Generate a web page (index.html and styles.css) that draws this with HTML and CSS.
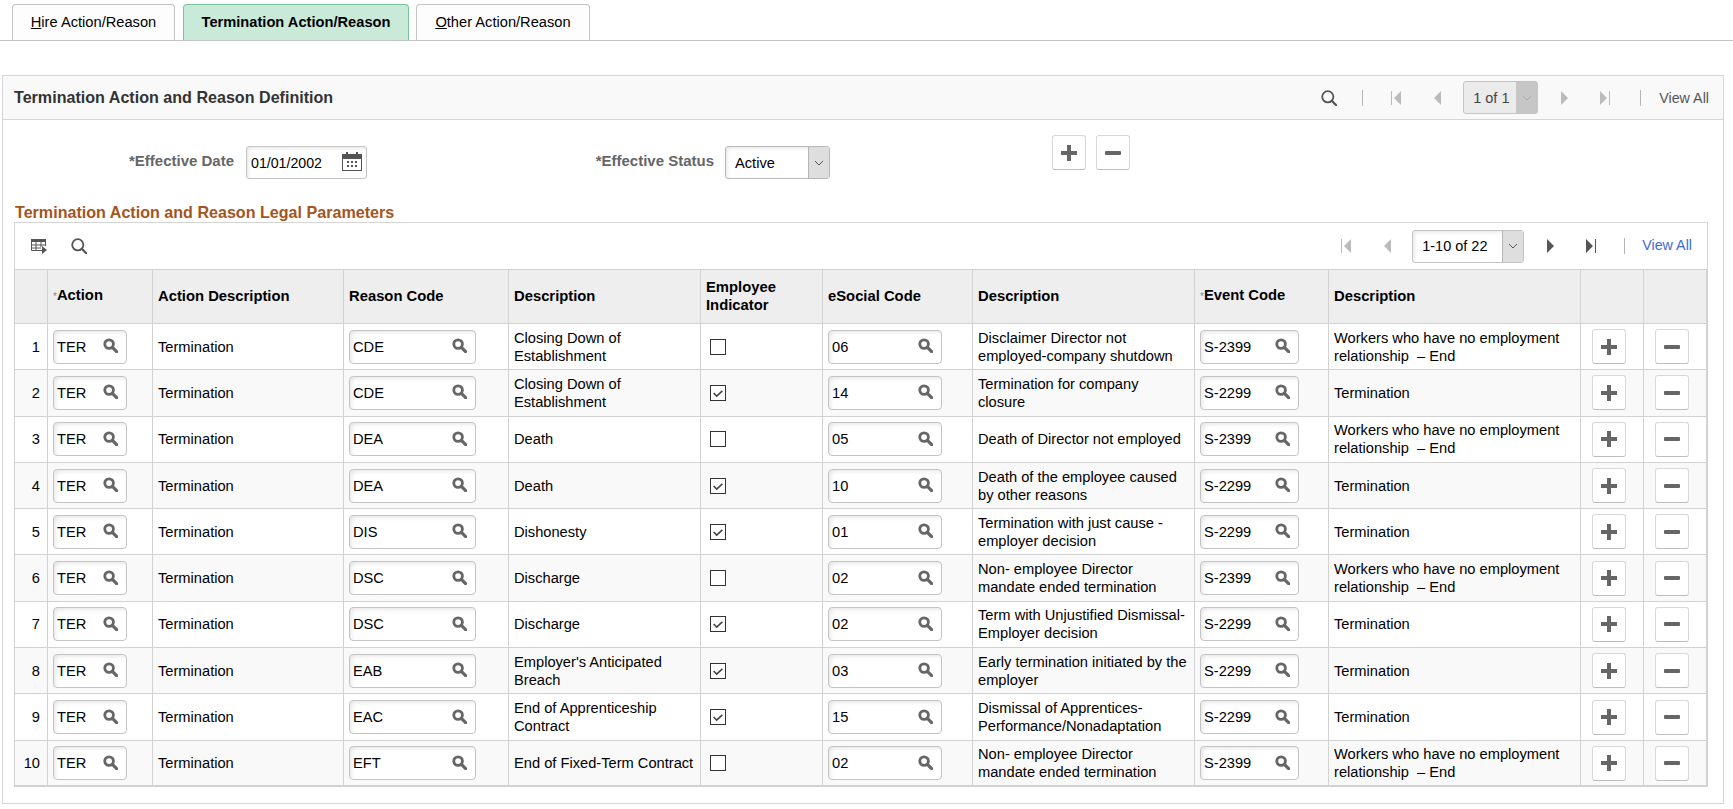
FILE: index.html
```html
<!DOCTYPE html>
<html lang="en">
<head>
  <meta charset="UTF-8" />
  <title>Termination Action/Reason</title>
  <link rel="stylesheet" href="styles.css">
</head>
<body>

  <svg class="sprites" width="0" height="0">
    <symbol id="i-lookup" viewBox="0 0 16 16">
      <circle cx="6.5" cy="6.5" r="4.6" fill="none" stroke="#666" stroke-width="3"/>
      <path d="M10 10l4.5 4.5" stroke="#666" stroke-width="3.4" stroke-linecap="round"/>
    </symbol>
    <symbol id="i-search" viewBox="0 0 16 16">
      <circle cx="6.8" cy="6.8" r="5.6" fill="none" stroke="#555" stroke-width="1.8"/>
      <path d="M10.8 10.8l4.4 4.4" stroke="#555" stroke-width="2.2" stroke-linecap="round"/>
    </symbol>
    <symbol id="i-plus" viewBox="0 0 16 16">
      <path d="M6 0h4v6h6v4h-6v6h-4v-6h-6v-4h6z" fill="#666"/>
    </symbol>
    <symbol id="i-minus" viewBox="0 0 16 16">
      <rect x="0" y="6" width="16" height="4" rx="1" fill="#666"/>
    </symbol>
    <symbol id="i-first" viewBox="0 0 10 14">
      <path d="M0 0h1v14h-1zM10 0v14l-7-7z" fill="currentColor"/>
    </symbol>
    <symbol id="i-prev" viewBox="0 0 7 14">
      <path d="M7 0v14l-7-7z" fill="currentColor"/>
    </symbol>
    <symbol id="i-next" viewBox="0 0 7 14">
      <path d="M0 0v14l7-7z" fill="currentColor"/>
    </symbol>
    <symbol id="i-last" viewBox="0 0 10 14">
      <path d="M0 0v14l7-7zM9 0h1v14h-1z" fill="currentColor"/>
    </symbol>
    <symbol id="i-chevron" viewBox="0 0 10 6">
      <path d="M1 1l4 4 4-4" fill="none" stroke="currentColor" stroke-width="1"/>
    </symbol>
    <symbol id="i-check" viewBox="0 0 16 16">
      <path d="M3 8l3.5 3.5 6.5-6" fill="none" stroke="#444" stroke-width="1.8"/>
    </symbol>
    <symbol id="i-calendar" viewBox="0 0 20 19">
      <path d="M0 2h4V0h2v2h8V0h2v2h4v5H0z" fill="#555"/>
      <rect x=".5" y="6.5" width="19" height="12" fill="#fff" stroke="#555"/>
      <path d="M5 9h2v2H5zM9 9h2v2H9zM13 9h2v2h-2zM5 13h2v2H5zM9 13h2v2H9zM13 13h2v2h-2z" fill="#555"/>
    </symbol>
    <symbol id="i-columns" viewBox="0 0 16 16">
      <path d="M0 1h15v3H0z" fill="#555"/>
      <path d="M.5 4v8.5H11M5 4v8M10 4v5M14.5 4v4M1 7h13M1 10h9" fill="none" stroke="#555"/>
      <path d="M11 8l5 4-5 4z" fill="#555"/>
    </symbol>
  </svg>

  <div class="tabs">
    <a class="tab tab-hire"><u>H</u>ire Action/Reason</a>
    <a class="tab tab-term active">Termination Action/Reason</a>
    <a class="tab tab-other"><u>O</u>ther Action/Reason</a>
  </div>

  <div class="panel">
    <div class="panel-head">
      <h2>Termination Action and Reason Definition</h2>
      <div class="pager pager-top">
        <svg class="ic16"><use href="#i-search"/></svg>
        <span class="sep s1"></span>
        <svg class="nav-first off"><use href="#i-first"/></svg>
        <svg class="nav-prev off"><use href="#i-prev"/></svg>
        <div class="page-drop off">
          <span>1 of 1</span>
          <b><svg><use href="#i-chevron"/></svg></b>
        </div>
        <svg class="nav-next off"><use href="#i-next"/></svg>
        <svg class="nav-last off"><use href="#i-last"/></svg>
        <span class="sep s2"></span>
        <a class="view-all">View All</a>
      </div>
    </div>

    <div class="form-row">
      <label class="lbl-date">*Effective Date</label>
      <div class="date-box">
        <span>01/01/2002</span>
        <svg><use href="#i-calendar"/></svg>
      </div>
      <label class="lbl-status">*Effective Status</label>
      <div class="select-box">
        <span>Active</span>
        <b><svg><use href="#i-chevron"/></svg></b>
      </div>
      <button class="btn btn-add"><svg><use href="#i-plus"/></svg></button>
      <button class="btn"><svg><use href="#i-minus"/></svg></button>
    </div>

    <h3>Termination Action and Reason Legal Parameters</h3>

    <div class="grid">
      <div class="grid-bar">
        <svg class="ic16"><use href="#i-columns"/></svg>
        <svg class="ic16 bar-search"><use href="#i-search"/></svg>
        <div class="pager pager-grid">
          <svg class="nav-first off"><use href="#i-first"/></svg>
          <svg class="nav-prev off"><use href="#i-prev"/></svg>
          <div class="page-drop">
            <span>1-10 of 22</span>
            <b><svg><use href="#i-chevron"/></svg></b>
          </div>
          <svg class="nav-next"><use href="#i-next"/></svg>
          <svg class="nav-last"><use href="#i-last"/></svg>
          <span class="sep s2"></span>
          <a class="view-all">View All</a>
        </div>
      </div>

      <table>
        <colgroup>
          <col class="c-num"><col class="c-action"><col class="c-adesc"><col class="c-reason"><col class="c-desc">
          <col class="c-emp"><col class="c-esoc"><col class="c-edesc"><col class="c-event"><col class="c-evdesc">
          <col class="c-btn"><col class="c-btn">
        </colgroup>
        <thead>
          <tr>
            <th></th>
            <th><i>*</i>Action</th>
            <th>Action Description</th>
            <th>Reason Code</th>
            <th>Description</th>
            <th>Employee<br>Indicator</th>
            <th>eSocial Code</th>
            <th>Description</th>
            <th><i>*</i>Event Code</th>
            <th>Description</th>
            <th></th>
            <th></th>
          </tr>
        </thead>
        <tbody>
          <tr>
            <td class="num">1</td>
            <td><div class="lookup w-action">TER<svg><use href="#i-lookup"/></svg></div></td>
            <td>Termination</td>
            <td><div class="lookup w-reason">CDE<svg><use href="#i-lookup"/></svg></div></td>
            <td>Closing Down of<br>Establishment</td>
            <td><span class="check"></span></td>
            <td><div class="lookup w-esoc">06<svg><use href="#i-lookup"/></svg></div></td>
            <td>Disclaimer Director not<br>employed-company shutdown</td>
            <td><div class="lookup w-event">S-2399<svg><use href="#i-lookup"/></svg></div></td>
            <td>Workers who have no employment<br>relationship &nbsp;– End</td>
            <td><button class="btn"><svg><use href="#i-plus"/></svg></button></td>
            <td><button class="btn"><svg><use href="#i-minus"/></svg></button></td>
          </tr>
          <tr>
            <td class="num">2</td>
            <td><div class="lookup w-action">TER<svg><use href="#i-lookup"/></svg></div></td>
            <td>Termination</td>
            <td><div class="lookup w-reason">CDE<svg><use href="#i-lookup"/></svg></div></td>
            <td>Closing Down of<br>Establishment</td>
            <td><span class="check"><svg><use href="#i-check"/></svg></span></td>
            <td><div class="lookup w-esoc">14<svg><use href="#i-lookup"/></svg></div></td>
            <td>Termination for company<br>closure</td>
            <td><div class="lookup w-event">S-2299<svg><use href="#i-lookup"/></svg></div></td>
            <td>Termination</td>
            <td><button class="btn"><svg><use href="#i-plus"/></svg></button></td>
            <td><button class="btn"><svg><use href="#i-minus"/></svg></button></td>
          </tr>
          <tr>
            <td class="num">3</td>
            <td><div class="lookup w-action">TER<svg><use href="#i-lookup"/></svg></div></td>
            <td>Termination</td>
            <td><div class="lookup w-reason">DEA<svg><use href="#i-lookup"/></svg></div></td>
            <td>Death</td>
            <td><span class="check"></span></td>
            <td><div class="lookup w-esoc">05<svg><use href="#i-lookup"/></svg></div></td>
            <td>Death of Director not employed</td>
            <td><div class="lookup w-event">S-2399<svg><use href="#i-lookup"/></svg></div></td>
            <td>Workers who have no employment<br>relationship &nbsp;– End</td>
            <td><button class="btn"><svg><use href="#i-plus"/></svg></button></td>
            <td><button class="btn"><svg><use href="#i-minus"/></svg></button></td>
          </tr>
          <tr>
            <td class="num">4</td>
            <td><div class="lookup w-action">TER<svg><use href="#i-lookup"/></svg></div></td>
            <td>Termination</td>
            <td><div class="lookup w-reason">DEA<svg><use href="#i-lookup"/></svg></div></td>
            <td>Death</td>
            <td><span class="check"><svg><use href="#i-check"/></svg></span></td>
            <td><div class="lookup w-esoc">10<svg><use href="#i-lookup"/></svg></div></td>
            <td>Death of the employee caused<br>by other reasons</td>
            <td><div class="lookup w-event">S-2299<svg><use href="#i-lookup"/></svg></div></td>
            <td>Termination</td>
            <td><button class="btn"><svg><use href="#i-plus"/></svg></button></td>
            <td><button class="btn"><svg><use href="#i-minus"/></svg></button></td>
          </tr>
          <tr>
            <td class="num">5</td>
            <td><div class="lookup w-action">TER<svg><use href="#i-lookup"/></svg></div></td>
            <td>Termination</td>
            <td><div class="lookup w-reason">DIS<svg><use href="#i-lookup"/></svg></div></td>
            <td>Dishonesty</td>
            <td><span class="check"><svg><use href="#i-check"/></svg></span></td>
            <td><div class="lookup w-esoc">01<svg><use href="#i-lookup"/></svg></div></td>
            <td>Termination with just cause -<br>employer decision</td>
            <td><div class="lookup w-event">S-2299<svg><use href="#i-lookup"/></svg></div></td>
            <td>Termination</td>
            <td><button class="btn"><svg><use href="#i-plus"/></svg></button></td>
            <td><button class="btn"><svg><use href="#i-minus"/></svg></button></td>
          </tr>
          <tr>
            <td class="num">6</td>
            <td><div class="lookup w-action">TER<svg><use href="#i-lookup"/></svg></div></td>
            <td>Termination</td>
            <td><div class="lookup w-reason">DSC<svg><use href="#i-lookup"/></svg></div></td>
            <td>Discharge</td>
            <td><span class="check"></span></td>
            <td><div class="lookup w-esoc">02<svg><use href="#i-lookup"/></svg></div></td>
            <td>Non- employee Director<br>mandate ended termination</td>
            <td><div class="lookup w-event">S-2399<svg><use href="#i-lookup"/></svg></div></td>
            <td>Workers who have no employment<br>relationship &nbsp;– End</td>
            <td><button class="btn"><svg><use href="#i-plus"/></svg></button></td>
            <td><button class="btn"><svg><use href="#i-minus"/></svg></button></td>
          </tr>
          <tr>
            <td class="num">7</td>
            <td><div class="lookup w-action">TER<svg><use href="#i-lookup"/></svg></div></td>
            <td>Termination</td>
            <td><div class="lookup w-reason">DSC<svg><use href="#i-lookup"/></svg></div></td>
            <td>Discharge</td>
            <td><span class="check"><svg><use href="#i-check"/></svg></span></td>
            <td><div class="lookup w-esoc">02<svg><use href="#i-lookup"/></svg></div></td>
            <td>Term with Unjustified Dismissal-<br>Employer decision</td>
            <td><div class="lookup w-event">S-2299<svg><use href="#i-lookup"/></svg></div></td>
            <td>Termination</td>
            <td><button class="btn"><svg><use href="#i-plus"/></svg></button></td>
            <td><button class="btn"><svg><use href="#i-minus"/></svg></button></td>
          </tr>
          <tr>
            <td class="num">8</td>
            <td><div class="lookup w-action">TER<svg><use href="#i-lookup"/></svg></div></td>
            <td>Termination</td>
            <td><div class="lookup w-reason">EAB<svg><use href="#i-lookup"/></svg></div></td>
            <td>Employer's Anticipated<br>Breach</td>
            <td><span class="check"><svg><use href="#i-check"/></svg></span></td>
            <td><div class="lookup w-esoc">03<svg><use href="#i-lookup"/></svg></div></td>
            <td>Early termination initiated by the<br>employer</td>
            <td><div class="lookup w-event">S-2299<svg><use href="#i-lookup"/></svg></div></td>
            <td>Termination</td>
            <td><button class="btn"><svg><use href="#i-plus"/></svg></button></td>
            <td><button class="btn"><svg><use href="#i-minus"/></svg></button></td>
          </tr>
          <tr>
            <td class="num">9</td>
            <td><div class="lookup w-action">TER<svg><use href="#i-lookup"/></svg></div></td>
            <td>Termination</td>
            <td><div class="lookup w-reason">EAC<svg><use href="#i-lookup"/></svg></div></td>
            <td>End of Apprenticeship<br>Contract</td>
            <td><span class="check"><svg><use href="#i-check"/></svg></span></td>
            <td><div class="lookup w-esoc">15<svg><use href="#i-lookup"/></svg></div></td>
            <td>Dismissal of Apprentices-<br>Performance/Nonadaptation</td>
            <td><div class="lookup w-event">S-2299<svg><use href="#i-lookup"/></svg></div></td>
            <td>Termination</td>
            <td><button class="btn"><svg><use href="#i-plus"/></svg></button></td>
            <td><button class="btn"><svg><use href="#i-minus"/></svg></button></td>
          </tr>
          <tr>
            <td class="num">10</td>
            <td><div class="lookup w-action">TER<svg><use href="#i-lookup"/></svg></div></td>
            <td>Termination</td>
            <td><div class="lookup w-reason">EFT<svg><use href="#i-lookup"/></svg></div></td>
            <td>End of Fixed-Term Contract</td>
            <td><span class="check"></span></td>
            <td><div class="lookup w-esoc">02<svg><use href="#i-lookup"/></svg></div></td>
            <td>Non- employee Director<br>mandate ended termination</td>
            <td><div class="lookup w-event">S-2399<svg><use href="#i-lookup"/></svg></div></td>
            <td>Workers who have no employment<br>relationship &nbsp;– End</td>
            <td><button class="btn"><svg><use href="#i-plus"/></svg></button></td>
            <td><button class="btn"><svg><use href="#i-minus"/></svg></button></td>
          </tr>
        </tbody>
      </table>
    </div>
  </div>

</body>
</html>
```

FILE: styles.css
```css
* {
  margin: 0;
  padding: 0;
  box-sizing: border-box;
}

body {
  width: 1733px;
  height: 809px;
  overflow: hidden;
  background-color: #fff;
  color: #000;
  font-family: "Liberation Sans", Arial, sans-serif;
  font-size: 14.67px;
  line-height: 18px;
}

.sprites {
  position: absolute;
}

/* tabs */
.tabs {
  display: flex;
  gap: 8px;
  height: 41px;
  padding: 4px 0 0 12px;
  border-bottom: 1px solid #c4c4c4;
}

.tab {
  display: flex;
  align-items: center;
  justify-content: center;
  height: 36px;
  padding-bottom: 1px;
  background-color: #fdfdfd;
  border: 1px solid #c4c4c4;
  border-bottom: none;
  border-radius: 4px 4px 0 0;
}

.tab-hire { width: 163px; }
.tab-term { width: 226px; }
.tab-other { width: 174px; margin-left: -1px; }

.tab.active {
  background-color: #c9ead8;
  border-color: #79c69e;
  font-weight: bold;
}

/* main panel */
.panel {
  width: 1722px;
  height: 729px;
  margin: 34px 0 0 2px;
  border: 1px solid #d5d5d5;
}

.panel-head {
  display: flex;
  align-items: center;
  justify-content: space-between;
  height: 44px;
  padding: 0 14px 0 11px;
  background-color: #f9f9f9;
  border-bottom: 1px solid #d5d5d5;
}

h2 {
  margin-bottom: 2px;
  font-size: 16.1px;
  color: #333;
}

h3 {
  height: 19px;
  margin-left: 12px;
  font-size: 16.1px;
  color: #a4551d;
}

/* pagers */
.pager {
  display: flex;
  align-items: center;
}

.pager svg {
  display: block;
  color: #555;
}

.pager svg.off {
  color: #bbb;
}

.ic16 {
  width: 16px;
  height: 16px;
}

.nav-first, .nav-last {
  width: 10px;
  height: 14px;
}

.nav-prev, .nav-next {
  width: 7px;
  height: 14px;
}

.sep {
  width: 1px;
  height: 16px;
  background-color: #b5b5b5;
}

.pager-top .s1 { margin-left: 25px; }
.pager-top .nav-first { margin-left: 28px; }
.pager-top .nav-prev { margin-left: 33px; }
.pager-top .page-drop { width: 75px; margin-left: 22px; }
.pager-top .nav-next { margin-left: 23px; }
.pager-top .nav-last { margin-left: 32px; }
.pager-top .s2 { margin-left: 30px; }
.pager-top .view-all { margin-left: 18px; }

.pager-grid .nav-prev { margin-left: 33px; }
.pager-grid .page-drop { width: 112px; margin-left: 21px; }
.pager-grid .nav-next { margin-left: 23px; }
.pager-grid .nav-last { margin-left: 32px; }
.pager-grid .s2 { margin-left: 28px; }
.pager-grid .view-all { margin: 0 0 2px 17px; color: #3d6bd6; }

.view-all {
  font-size: 14.3px;
  color: #555;
}

.page-drop {
  display: flex;
  align-items: center;
  justify-content: space-between;
  height: 33px;
  padding-left: 9px;
  font-size: 14.5px;
  background-color: #fff;
  border: 1px solid #c4c4c4;
  border-radius: 3px;
  box-shadow: inset 3px 3px 4px -2px #e4e4e4;
}

.page-drop b, .select-box b {
  display: flex;
  align-items: center;
  justify-content: center;
  width: 21px;
  height: 31px;
  background-color: #dedede;
  border-left: 1px solid #b5b5b5;
}

.page-drop b svg, .select-box b svg {
  width: 10px;
  height: 6px;
  color: #555;
}

.page-drop.off {
  background-color: #ebebeb;
  color: #444;
  box-shadow: none;
}

.page-drop.off b {
  background-color: #c6c6c6;
  border-left-color: #c6c6c6;
}

.pager .page-drop.off b svg {
  color: #aaa;
}

/* effective date row */
.form-row {
  display: flex;
  align-items: flex-start;
  height: 83px;
  padding-top: 15px;
}

.form-row label {
  margin-top: 17px;
  text-align: right;
  font-size: 15px;
  font-weight: bold;
  color: #666;
}

.lbl-date {
  width: 231px;
  margin-right: 12px;
}

.date-box {
  display: flex;
  align-items: center;
  justify-content: space-between;
  width: 121px;
  height: 33px;
  margin-top: 11px;
  padding: 0 4px;
  font-size: 14.2px;
  border: 1px solid #c4c4c4;
  border-radius: 3px;
  box-shadow: inset 3px 3px 4px -2px #e4e4e4;
}

.date-box svg {
  width: 20px;
  height: 19px;
  margin-bottom: 2px;
}

.lbl-status {
  width: 347px;
  margin-right: 11px;
}

.select-box {
  display: flex;
  align-items: center;
  justify-content: space-between;
  width: 105px;
  height: 33px;
  margin-top: 11px;
  padding-left: 9px;
  border: 1px solid #b8b8b8;
  border-radius: 3px;
  box-shadow: inset 3px 3px 4px -2px #e4e4e4;
}

.btn {
  display: inline-flex;
  align-items: center;
  justify-content: center;
  width: 34px;
  height: 35px;
  margin-right: 10px;
  background-color: #fff;
  border: 1px solid #d8d8d8;
  border-bottom-color: #bdbdbd;
  border-radius: 3px;
  vertical-align: middle;
}

.btn svg {
  width: 16px;
  height: 16px;
}

.btn-add {
  margin-left: 221.5px;
}

/* grid */
.grid {
  width: 1694px;
  margin-left: 11px;
}

.grid-bar {
  display: flex;
  align-items: center;
  height: 47px;
  padding: 0 15px 0 16px;
  border: 1px solid #d5d5d5;
  border-bottom: none;
}

.bar-search {
  margin-left: 24px;
}

.pager-grid {
  margin-left: auto;
}

table {
  width: 1693px;
  table-layout: fixed;
  border-collapse: collapse;
  border-right: 2px solid #d2d2d2;
  border-bottom: 2px solid #d2d2d2;
}

.c-num { width: 33px; }
.c-action { width: 105px; }
.c-adesc { width: 191px; }
.c-reason { width: 165px; }
.c-desc { width: 192px; }
.c-emp { width: 122px; }
.c-esoc { width: 150px; }
.c-edesc { width: 222px; }
.c-event { width: 134px; }
.c-evdesc { width: 252px; }
.c-btn { width: 63px; }

th, td {
  border: 1px solid #d2d2d2;
  text-align: left;
  padding: 0 5px;
}

th {
  height: 54px;
  padding-bottom: 2px;
  background-color: #eee;
  font-size: 14.8px;
  font-weight: bold;
}

th i {
  font-style: normal;
  font-weight: normal;
  font-size: 10px;
  color: #7d8ba0;
}

td {
  height: 46.3px;
}

tbody tr:nth-child(even) {
  background-color: #f9f9f9;
}

td.num {
  text-align: right;
  padding-right: 7px;
}

td .btn {
  margin: 0 0 0 6px;
}

.lookup {
  display: flex;
  align-items: center;
  justify-content: space-between;
  height: 34px;
  padding: 0 8px 0 3px;
  background-color: #fff;
  border: 1px solid #c4c4c4;
  border-radius: 4px;
  box-shadow: inset 3px 3px 5px -2px #e2e2e2;
}

.lookup svg {
  width: 15px;
  height: 15px;
  margin-bottom: 2px;
}

.w-action { width: 74px; }
.w-reason { width: 127px; }
.w-esoc { width: 114px; }
.w-event { width: 99px; }

.check {
  display: block;
  width: 16px;
  height: 16px;
  margin-left: 4px;
  background-color: #fff;
  border: 1px solid #333;
}

.check svg {
  display: block;
  width: 14px;
  height: 14px;
}
```
